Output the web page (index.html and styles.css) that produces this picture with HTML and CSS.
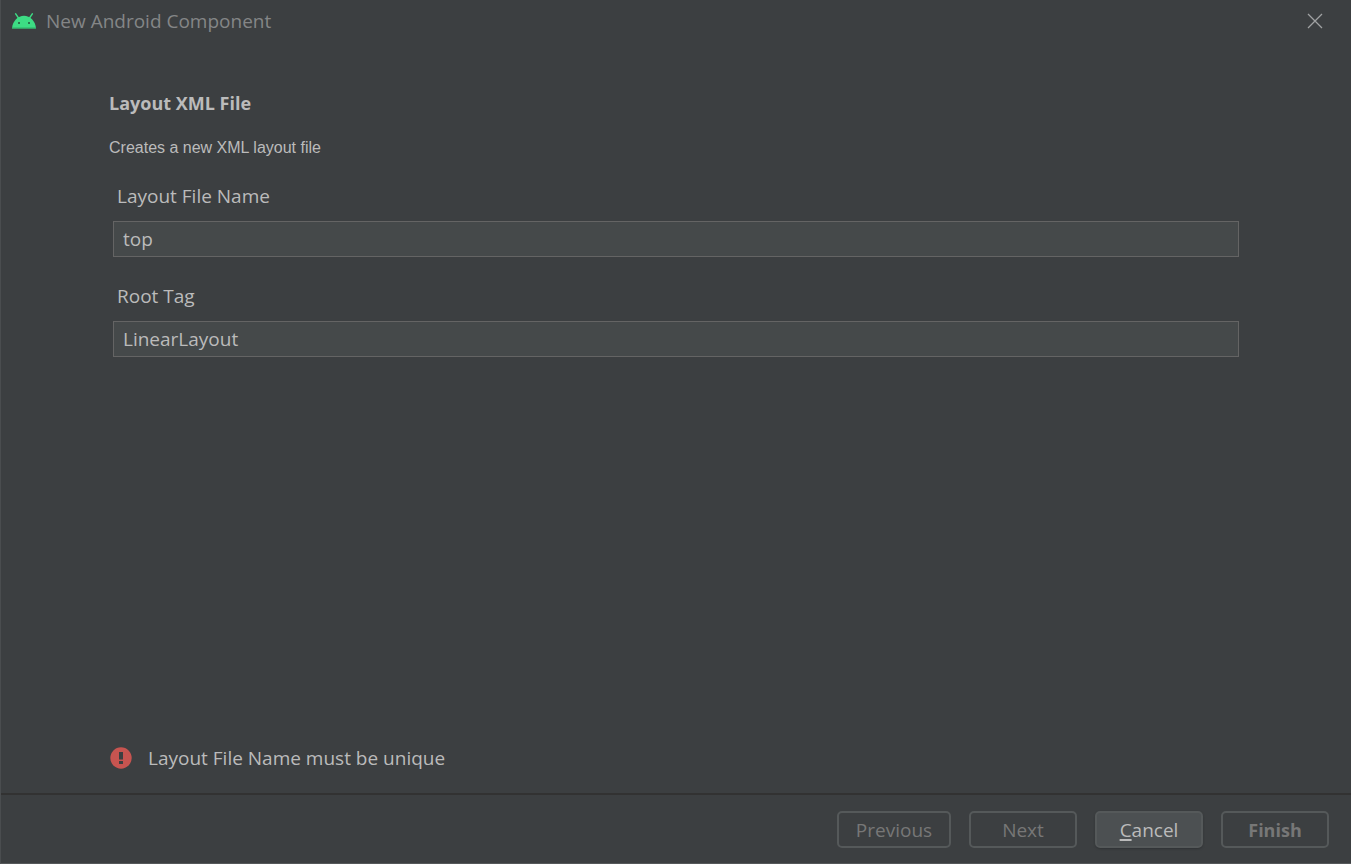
FILE: index.html
```html
<!DOCTYPE html>
<html lang="en">
<head>
<meta charset="utf-8">
<title>New Android Component</title>
<link rel="stylesheet" href="styles.css">
</head>
<body>
<form class="dialog">
  <header class="titlebar">
    <svg class="robot" viewBox="0 0 24 16" aria-hidden="true">
      <path d="M3.700 .8l2.700 4M20.300 .8l-2.700 4" stroke="#3ddc84" stroke-width="1.500" stroke-linecap="round"/>
      <path d="M0 15.500C.5 8 6 2.800 12 2.800S23.500 8 24 15.500z" fill="#3ddc84"/>
      <path d="M0 15.500l.2-1h23.600l.2 1z" fill="#2fae69"/>
      <circle cx="7" cy="10" r="1" fill="#26523c"/>
      <circle cx="17" cy="10" r="1" fill="#26523c"/>
    </svg>
    <span class="title">New Android Component</span>
    <button class="close" type="button" aria-label="Close">
      <svg viewBox="0 0 16 16" aria-hidden="true"><path d="M1 1l14 14M15 1L1 15" stroke="#a0a2a3" stroke-width="1.300"/></svg>
    </button>
  </header>
  <main class="content">
    <h1 class="heading">Layout XML File</h1>
    <p class="description">Creates a new XML layout file</p>
    <div class="field">
      <label class="label" for="file-name">Layout File Name</label>
      <input class="input" id="file-name" type="text" value="top">
    </div>
    <div class="field">
      <label class="label" for="root-tag">Root Tag</label>
      <input class="input" id="root-tag" type="text" value="LinearLayout">
    </div>
    <p class="error" role="alert">
      <svg class="error-icon" viewBox="0 0 22 22" aria-hidden="true">
        <circle cx="11" cy="11" r="10.700" fill="#c75450"/>
        <path d="M9 5h4v7.500H9zM9 14h4v3H9z" fill="#3c3f41"/>
      </svg>
      <span>Layout File Name must be unique</span>
    </p>
  </main>
  <footer class="footer">
    <button class="button wide" type="button" disabled>Previous</button>
    <button class="button" type="button" disabled>Next</button>
    <button class="button active" type="button"><u>C</u>ancel</button>
    <button class="button strong" type="submit" disabled>Finish</button>
  </footer>
</form>
</body>
</html>
```
FILE: styles.css
```css
* {
  box-sizing: border-box;
}

body {
  margin: 0;
  background: #3c3f41;
  color: #bbbbbb;
  font: 19px/26px "Open Sans", sans-serif;
}

.dialog {
  display: flex;
  flex-direction: column;
  min-height: 100vh;
  border-left: 1px solid #4a4d4f;
  border-bottom: 1px solid #55585a;
}

.titlebar {
  display: flex;
  align-items: center;
  height: 42px;
  padding: 0 28px 0 11px;
  color: #848687;
}

.robot {
  width: 24px;
  height: 16px;
  margin-right: 10px;
  fill: none;
}

.close {
  width: 16px;
  height: 16px;
  margin-left: auto;
  padding: 0;
  border: 0;
  background: none;
}

.close svg {
  display: block;
}

.content {
  flex: 1;
  display: flex;
  flex-direction: column;
  padding: 48px 112px 22px 108px;
}

.heading {
  margin: 0;
  font-size: 18px;
  line-height: 26px;
}

.description {
  margin: 19px 0;
  font: 16px/26px "Liberation Sans", sans-serif;
}

.field {
  display: flex;
  flex-direction: column;
  gap: 13px;
  margin: 0 0 23px 4px;
}

.label {
  padding: 4px 4px 0;
  line-height: 24px;
}

.input {
  width: 100%;
  height: 36px;
  padding: 0 9px 1px;
  border: 1px solid #646464;
  border-radius: 0;
  outline: none;
  background: #45494a;
  color: #bbbbbb;
  font: inherit;
}

.error {
  display: flex;
  align-items: center;
  gap: 16px;
  margin: auto 0 0 1px;
}

.error-icon {
  width: 22px;
  height: 22px;
}

.footer {
  display: flex;
  justify-content: flex-end;
  gap: 18px;
  padding: 16px 22px 15px;
  border-top: 2px solid #323232;
}

.button {
  width: 108px;
  height: 37px;
  padding: 0;
  border: 2px solid #55595a;
  border-radius: 5px;
  background: none;
  color: #777777;
  font: inherit;
}

.wide {
  width: 114px;
}

.active {
  background: #4c5052;
  color: #bbbbbb;
  box-shadow: 0 1px 2px #303335;
}

.active u {
  text-decoration-thickness: 2px;
  text-underline-offset: 2px;
}

.strong {
  font-size: 18px;
  font-weight: bold;
}
```
